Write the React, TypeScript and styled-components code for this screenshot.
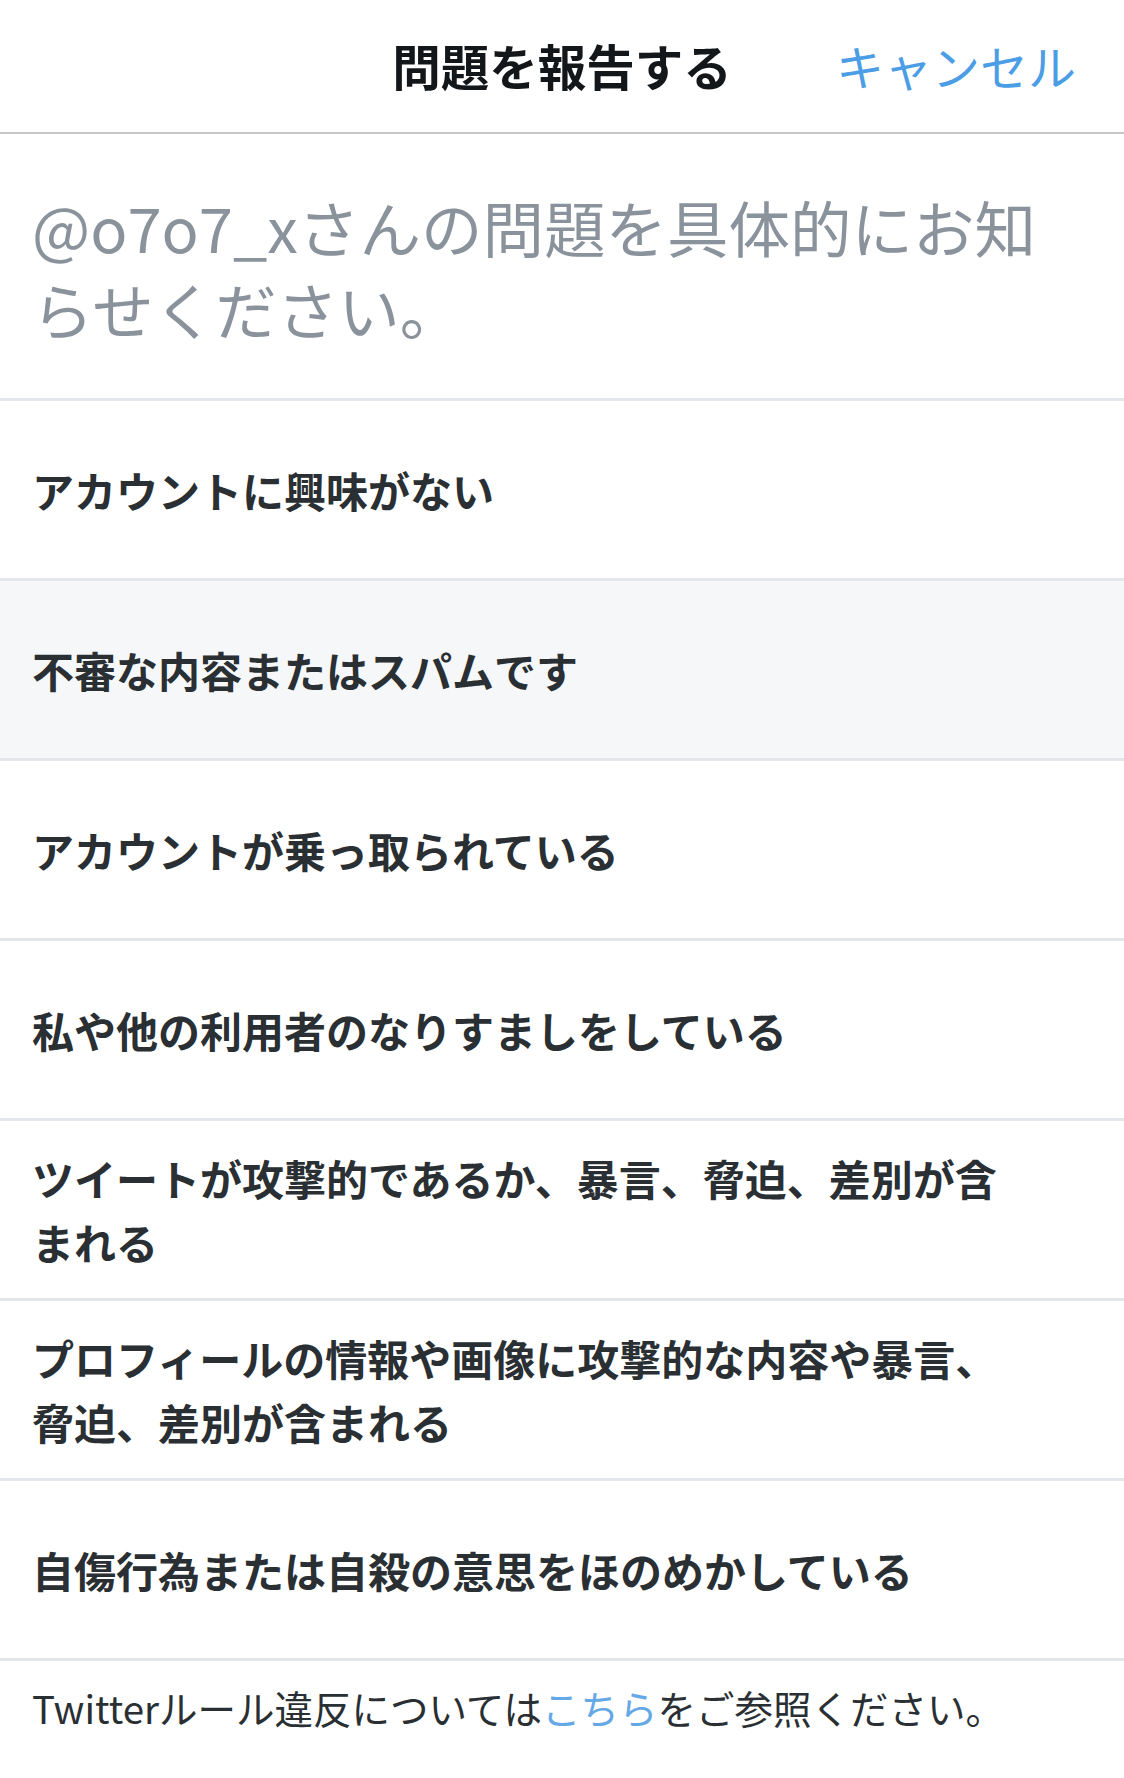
import React from "react";
import styled, { createGlobalStyle } from "styled-components";

const Global = createGlobalStyle`
  html, body {
    margin: 0;
    padding: 0;
    background: #ffffff;
  }
  body {
    font-family: "Noto Sans CJK JP", "Noto Sans", sans-serif;
    -webkit-font-smoothing: antialiased;
  }
  * { box-sizing: border-box; }
`;

const Page = styled.div`
  width: 1124px;
  min-height: 1778px;
  display: flex;
  flex-direction: column;
  background: #ffffff;
`;

const Header = styled.header`
  height: 134px;
  display: grid;
  grid-template-columns: 1fr auto 1fr;
  align-items: center;
  padding: 0 48px 2px 48px;
  border-bottom: 2px solid #c6c6c8;
`;

const Title = styled.h1`
  grid-column: 2;
  margin: 0;
  font-size: 48.5px;
  font-weight: 700;
  color: #14171a;
  line-height: 1;
`;

const Cancel = styled.button`
  grid-column: 3;
  justify-self: end;
  border: none;
  background: none;
  padding: 0;
  font-family: inherit;
  font-size: 48px;
  font-weight: 400;
  color: #4b9de6;
  line-height: 1;
  cursor: pointer;
`;

const Prompt = styled.div`
  padding: 52px 32px 48px 32px;
  min-height: 265px;
  border-bottom: 3px solid #e3e6ea;
  font-size: 61.5px;
  line-height: 82px;
  font-weight: 400;
  color: #8a939c;
`;

const Row = styled.div<{ $active?: boolean }>`
  height: 180px;
  display: flex;
  align-items: center;
  padding: 0 100px 0 32px;
  border-bottom: 3px solid #e3e6ea;
  background: ${(p) => (p.$active ? "#f5f7f9" : "#ffffff")};
  font-size: 42px;
  line-height: 64px;
  font-weight: 700;
  color: #292f33;
  cursor: pointer;
`;

const Footer = styled.footer`
  padding: 14px 32px 0 32px;
  font-size: 38.5px;
  line-height: 64px;
  font-weight: 400;
  color: #292f33;
`;

const Link = styled.a`
  color: #65a8e6;
  text-decoration: none;
`;

const reasons = [
  "アカウントに興味がない",
  "不審な内容またはスパムです",
  "アカウントが乗っ取られている",
  "私や他の利用者のなりすましをしている",
  "ツイートが攻撃的であるか、暴言、脅迫、差別が含まれる",
  "プロフィールの情報や画像に攻撃的な内容や暴言、脅迫、差別が含まれる",
  "自傷行為または自殺の意思をほのめかしている",
];

export default function App() {
  return (
    <Page>
      <Global />
      <Header>
        <Title>問題を報告する</Title>
        <Cancel>キャンセル</Cancel>
      </Header>
      <Prompt>@o7o7_xさんの問題を具体的にお知らせください。</Prompt>
      {reasons.map((r, i) => (
        <Row key={r} $active={i === 1}>
          {r}
        </Row>
      ))}
      <Footer>
        Twitterルール違反については<Link href="#">こちら</Link>をご参照ください。
      </Footer>
    </Page>
  );
}
